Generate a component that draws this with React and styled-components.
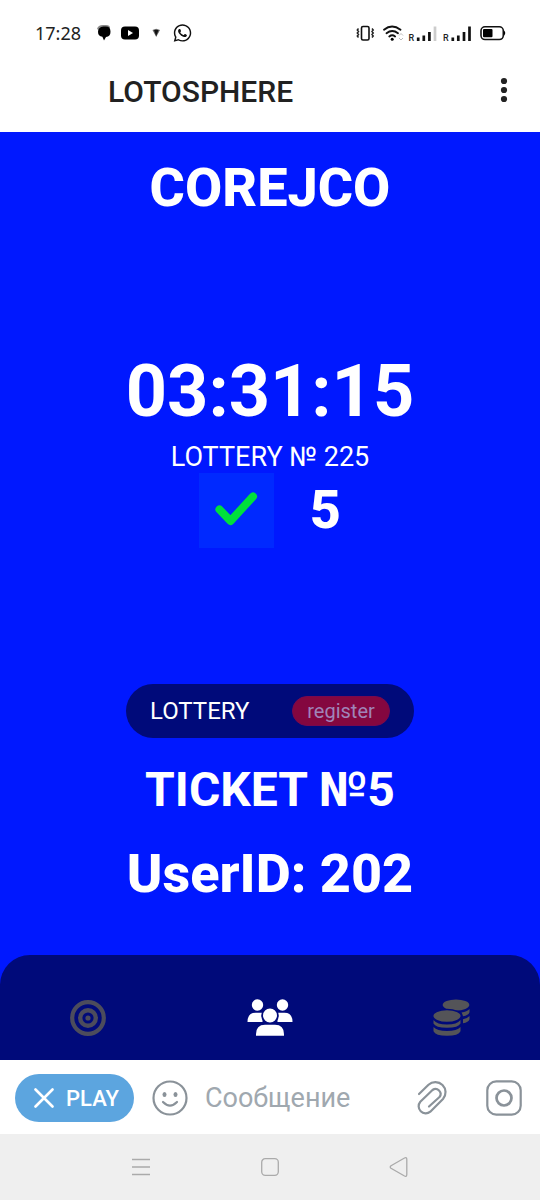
import styled, { createGlobalStyle } from "styled-components";
import { FaWhatsapp } from "react-icons/fa";

const App = () => {
  return (
    <>
      <GlobalStyle />
      <Phone>
        <StatusBar>
          <Clock>17:28</Clock>
          <Icon width="102" height="24" viewBox="0 0 102 24">
            <path d="M2 8q1-4 6-4h3q4 0 4 3l-2 2H4z" fill="#888" />
            <path
              d="M8.500 5.500h2.500q4.500 0 4.500 5.200q0 5-4.500 5.300l-2 3.500-1.600-3.700q-4.400-.4-4.400-5t5.500-5.300z"
              fill="#000"
            />
            <rect x="26" y="5.500" width="18" height="13" rx="4" fill="#000" />
            <path d="M33 9l5 3-5 3z" fill="#fff" />
            <path d="M57.500 9l3.700-1.300L65 9l-3.800 7z" fill="#666" />
            <path d="M59 9h4.500l-2.300 6z" fill="#111" />
            <FaWhatsapp x="77.500" y="2" size="20" color="#111" />
          </Icon>
          <Icon width="154" height="24" viewBox="0 0 154 24">
            <rect x="6.500" y="5.500" width="7.500" height="13.500" rx="1.500" fill="none" stroke="#111" strokeWidth="1.600" />
            <path
              d="M3.500 7.500l-1.200 1.500 1.200 1.500-1.200 1.500 1.200 1.500-1.200 1.500 1.200 1.500M17 7.500l1.200 1.500-1.200 1.500 1.200 1.500-1.200 1.500 1.200 1.500-1.200 1.500"
              fill="none"
              stroke="#222"
              strokeWidth="1.500"
            />
            <g fill="none" stroke="#111" strokeWidth="1.900" strokeLinecap="round">
              <path d="M29 8.700q8-6.500 16.500 0M31.500 12.200q5.700-4.500 11.500 0M34.300 15.400q2.900-2.200 5.800 0" />
            </g>
            <circle cx="37.200" cy="18.300" r="1.500" />
            <path d="M44 14.500l2-2 2 2M44 17l2 2 2-2" fill="none" stroke="#bbb" />
            <SignalLabel x="53.500" y="20">R</SignalLabel>
            <path d="M63.200 20v-3.500M68.800 20v-5.500M74.400 20v-9" stroke="#111" strokeWidth="2.700" />
            <path d="M80 20v-14.500" stroke="#ccc" strokeWidth="2.700" />
            <SignalLabel x="88" y="20">R</SignalLabel>
            <path d="M97.800 20v-3.500M103.300 20v-5.500M109 20v-9M114.500 20v-14.500" stroke="#111" strokeWidth="2.700" />
            <rect x="126" y="5.800" width="22.300" height="12.700" rx="4" fill="none" stroke="#111" strokeWidth="1.600" />
            <rect x="128" y="8" width="9.500" height="8.300" rx="1" />
            <path d="M149 9.500q2.500 2.500 0 5.200z" />
          </Icon>
        </StatusBar>
        <TitleBar>
          <Title>LOTOSPHERE</Title>
          <Icon width="8" height="26" viewBox="0 0 8 26">
            <circle cx="4" cy="4" r="3.100" fill="#222" />
            <circle cx="4" cy="13" r="3.100" fill="#222" />
            <circle cx="4" cy="22" r="3.100" fill="#222" />
          </Icon>
        </TitleBar>
        <Game>
          <Line $top={23} $height={66} $size={54} $weight={800}>
            COREJCO
          </Line>
          <Line $top={126} $height={90} $size={72} $weight={700}>
            03:31:15
          </Line>
          <Line $top={4} $height={32} $size={27} $weight={400}>
            LOTTERY № 225
          </Line>
          <PickRow>
            <PickTile>
              <svg width="44" height="36" viewBox="0 0 44 36">
                <path
                  d="M5.500 18.500l11 11.500L39 5.500"
                  fill="none"
                  stroke="#00e03c"
                  strokeWidth="8"
                  strokeLinecap="round"
                  strokeLinejoin="round"
                />
              </svg>
            </PickTile>
            <PickCount>5</PickCount>
          </PickRow>
          <LotteryPill>
            <PillLabel>LOTTERY</PillLabel>
            <RegisterButton>register</RegisterButton>
          </LotteryPill>
          <Line $top={23} $height={58} $size={48} $weight={700}>
            TICKET №5
          </Line>
          <Line $top={22} $height={66} $size={54} $weight={800}>
            UserID: 202
          </Line>
          <TabBar>
            <svg width="36" height="36" viewBox="0 0 36 36" fill="none" stroke="#4c4c5c">
              <circle cx="18" cy="18" r="15.800" strokeWidth="4.200" />
              <circle cx="18" cy="18" r="7.800" strokeWidth="4.400" />
              <circle cx="18" cy="18" r="2.600" fill="#4c4c5c" stroke="none" />
            </svg>
            <svg width="46" height="37" viewBox="0 0 46 37" fill="#fff">
              <circle cx="10.500" cy="6" r="5.700" />
              <circle cx="35.500" cy="6" r="5.700" />
              <path d="M.5 23q0-9.200 8-9.200h7v9.200z" />
              <path d="M45.500 23q0-9.200-8-9.200h-7v9.200z" />
              <circle cx="23" cy="16.500" r="7.900" stroke="#000a7a" strokeWidth="1.800" />
              <path d="M9 36.700v-1.500q0-9.500 9-9.500h10q9 0 9 9.500v1.500z" />
            </svg>
            <svg width="37" height="37" viewBox="0 0 37 37" fill="#545458">
              <ellipse cx="23" cy="6" rx="13.300" ry="5.500" />
              <path d="M28.500 13.500q5.500-1 8-3.500v3.300q-1 3-6.500 4-.5-2.200-1.500-3.800zM30 20.200q4.500-1 6.500-3.200v3.200q-1 3-6.500 4z" />
              <ellipse cx="14" cy="17" rx="14.300" ry="6.500" stroke="#000a7a" strokeWidth="1.500" />
              <path d="M.5 20.900q3.500 4.500 13.500 4.500t13.500-4.500v3.700q-2 4.200-13.500 4.200T.5 24.600zM.5 28q3.500 4 13.500 4t13.500-4v4.200q-2 4.500-13.500 4.500T.5 32.200z" />
            </svg>
          </TabBar>
        </Game>
        <MessageBar>
          <PlayButton>
            <svg width="20" height="20" viewBox="0 0 20 20" stroke="#fff" strokeWidth="2.600" strokeLinecap="round">
              <path d="M1.500 1.500l17 17M18.500 1.500l-17 17" />
            </svg>
            PLAY
          </PlayButton>
          <Icon width="36" height="36" viewBox="0 0 36 36" fill="none" stroke="#8a9299" strokeWidth="2.200">
            <circle cx="18" cy="18" r="16.500" />
            <path d="M11 22q7 7 14 0" strokeLinecap="round" />
            <ellipse cx="12.500" cy="14.500" rx="2" ry="2.600" fill="#8a9299" stroke="none" />
            <ellipse cx="23.500" cy="14.500" rx="2" ry="2.600" fill="#8a9299" stroke="none" />
          </Icon>
          <Placeholder>Сообщение</Placeholder>
          <Icon width="32" height="36" viewBox="0 0 32 36" fill="none" stroke="#8a9299" strokeWidth="2.200">
            <path
              d="M2 14L11.500 4.700A10.200 10.200 0 0 1 26 19L13.300 31.700A7.100 7.100 0 0 1 3.300 21.700L15.500 10A5 5 0 0 1 22.500 17L12 26.500"
              strokeLinecap="round"
              strokeLinejoin="round"
            />
          </Icon>
          <Icon width="36" height="36" viewBox="0 0 36 36" fill="none" stroke="#8a9299" strokeWidth="2.200">
            <rect x="1.300" y="1.300" width="33.400" height="33.400" rx="9" />
            <circle cx="18" cy="18" r="7.500" strokeWidth="2.700" />
          </Icon>
        </MessageBar>
        <NavBar>
          <svg width="18" height="18" viewBox="0 0 18 18" stroke="#aaa" strokeWidth="1.400">
            <path d="M0 1.500h18M0 9h18M0 16.500h18" />
          </svg>
          <svg width="18" height="20" viewBox="0 0 18 20" fill="none" stroke="#aaa" strokeWidth="1.300">
            <rect x=".7" y="1.700" width="16.600" height="16.600" rx="3.500" />
          </svg>
          <svg width="19" height="22" viewBox="0 0 19 22" fill="none" stroke="#aaa" strokeWidth="1.300">
            <path d="M2 9.700L15.500 2q2.300-1 2.300 1.500v15q0 2.500-2.300 1.500L2 12.300q-1.500-1.300 0-2.600z" />
          </svg>
        </NavBar>
      </Phone>
    </>
  );
};

const GlobalStyle = createGlobalStyle`
  body {
    margin: 0;
    background: #fff;
    font-family: Roboto, sans-serif;
  }

  svg {
    display: block;
    flex-shrink: 0;
  }
`;

const Phone = styled.div`
  width: 540px;
  height: 1200px;
  display: flex;
  flex-direction: column;
  overflow: hidden;
`;

const StatusBar = styled.header`
  height: 44px;
  padding: 21px 31px 0 35px;
  box-sizing: border-box;
  display: flex;
  flex-shrink: 0;
`;

const Icon = styled.svg`
  flex-shrink: 0;
`;

const Clock = styled.span`
  width: 60px;
  font-family: "Noto Sans", sans-serif;
  font-size: 18px;
  line-height: 24px;
  color: #222;

  & + svg {
    margin-right: auto;
  }
`;

const SignalLabel = styled.text`
  font-size: 9px;
  font-weight: 500;
  fill: #222;
`;

const TitleBar = styled.div`
  height: 88px;
  padding: 6px 32px 0 108px;
  box-sizing: border-box;
  display: flex;
  flex-shrink: 0;
  align-items: center;
  justify-content: space-between;

  svg {
    margin-bottom: 2px;
  }
`;

const Title = styled.h1`
  margin: 0;
  font-size: 30px;
  font-weight: 500;
  color: #212121;
`;

const Game = styled.main`
  height: 928px;
  display: flex;
  flex-direction: column;
  flex-shrink: 0;
  align-items: center;
  background: #0018ff;
  color: #fff;
`;

const Line = styled.p`
  margin: ${({ $top }) => $top}px 0 0;
  flex-shrink: 0;
  font-size: ${({ $size }) => $size}px;
  font-weight: ${({ $weight }) => $weight};
  line-height: ${({ $height }) => $height}px;
  white-space: nowrap;
`;

const PickRow = styled.div`
  width: 142px;
  height: 75px;
  display: flex;
  flex-shrink: 0;
  align-items: center;
  justify-content: space-between;
`;

const PickTile = styled.div`
  width: 75px;
  height: 75px;
  padding: 0 1px 4px 0;
  box-sizing: border-box;
  display: flex;
  align-items: center;
  justify-content: center;
  background: #0029ff;
`;

const PickCount = styled.span`
  padding-bottom: 3px;
  font-size: 54px;
  font-weight: 800;
`;

const LotteryPill = styled.div`
  width: 288px;
  height: 54px;
  margin-top: 136px;
  padding: 0 24px;
  box-sizing: border-box;
  border-radius: 27px;
  display: flex;
  flex-shrink: 0;
  align-items: center;
  justify-content: space-between;
  background: #000a7a;
`;

const PillLabel = styled.span`
  font-size: 24px;
`;

const RegisterButton = styled.button`
  width: 98px;
  height: 30px;
  padding: 0;
  border: 1px solid #78084f;
  border-radius: 15px;
  background: #84073f;
  color: #a084b8;
  font-family: inherit;
  font-size: 20px;
`;

const TabBar = styled.nav`
  width: 540px;
  height: 105px;
  margin-top: auto;
  padding: 20px 70px 0;
  box-sizing: border-box;
  border-radius: 30px 30px 0 0;
  display: flex;
  align-items: center;
  justify-content: space-between;
  background: #000a7a;
`;

const MessageBar = styled.div`
  height: 74px;
  padding: 2px 18px 0 15px;
  box-sizing: border-box;
  display: flex;
  flex-shrink: 0;
  align-items: center;
`;

const PlayButton = styled.button`
  width: 119px;
  height: 48px;
  margin-right: 18px;
  padding: 0 0 0 19px;
  border: 0;
  border-radius: 24px;
  display: flex;
  align-items: center;
  gap: 12px;
  background: #5ca5df;
  color: #fff;
  font-family: inherit;
  font-size: 22px;
  font-weight: 500;
`;

const Placeholder = styled.span`
  width: 229px;
  padding-left: 17px;
  box-sizing: border-box;
  font-size: 27px;
  color: #a0a8af;

  & + svg {
    margin-right: auto;
  }
`;

const NavBar = styled.footer`
  height: 66px;
  padding: 0 132px;
  box-sizing: border-box;
  display: flex;
  flex-shrink: 0;
  align-items: center;
  justify-content: space-between;
  background: #efefef;
`;

export default App;
